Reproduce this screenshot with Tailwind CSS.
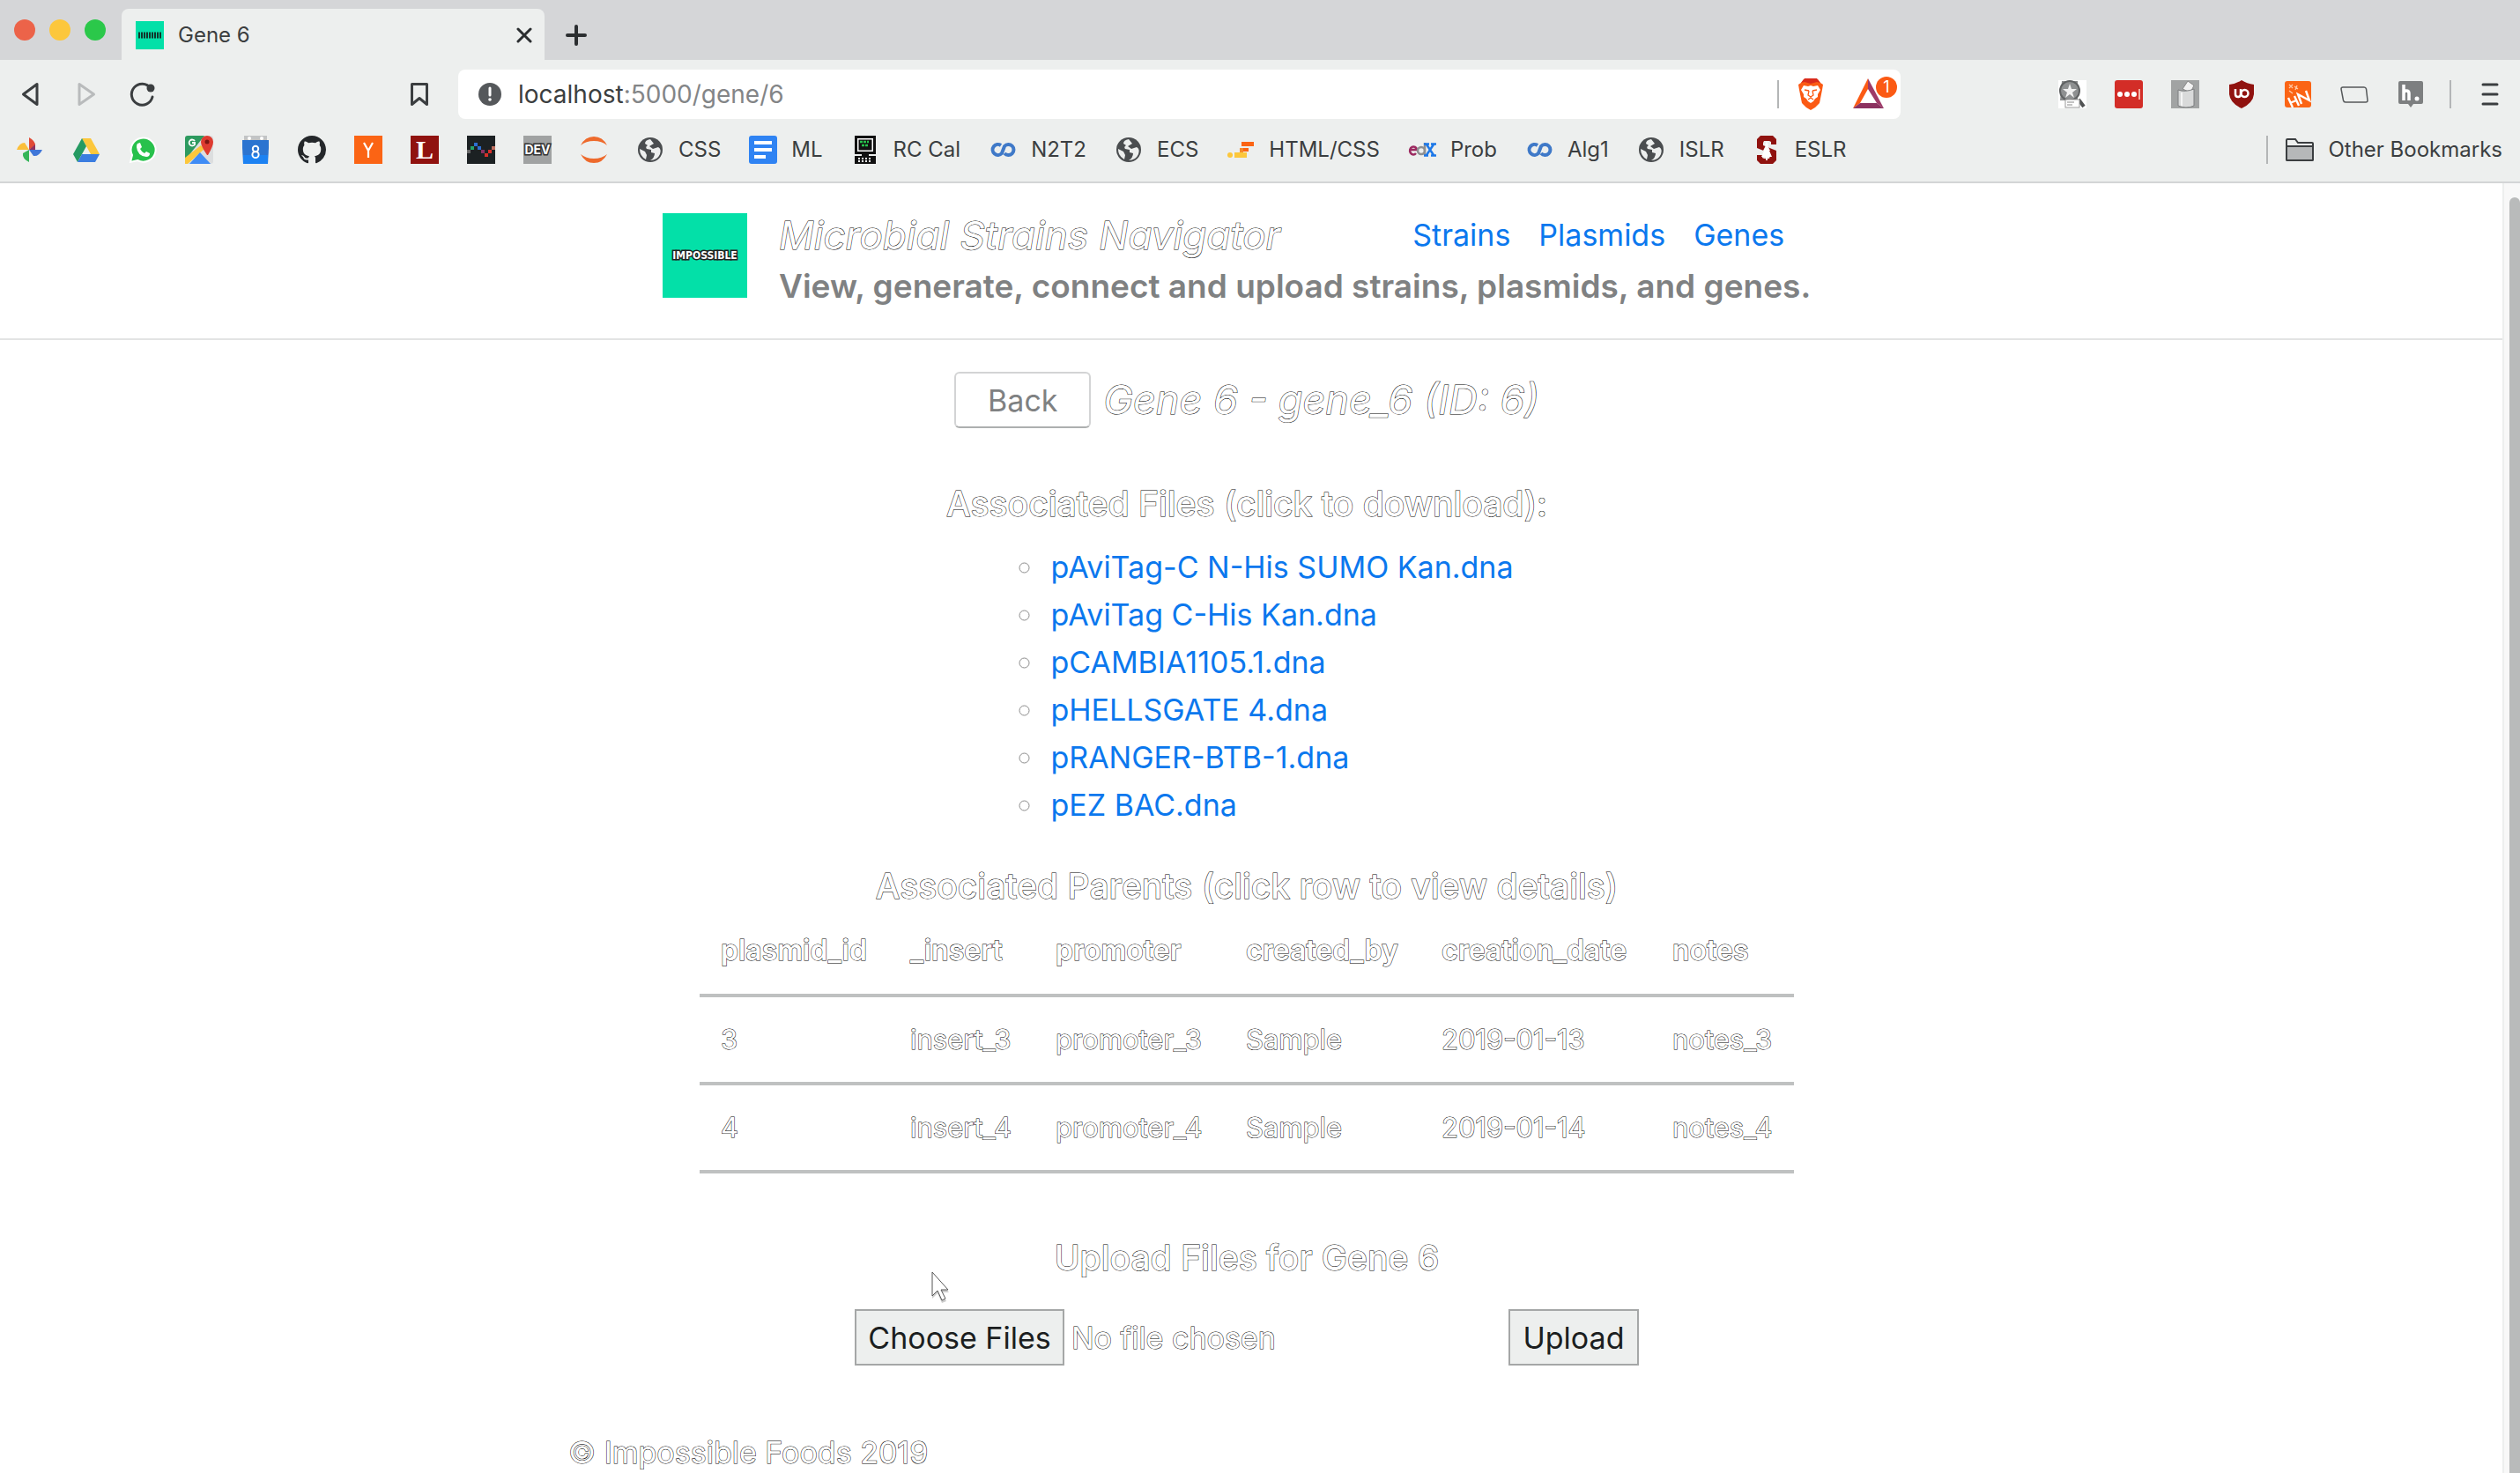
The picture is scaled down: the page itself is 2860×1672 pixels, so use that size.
<!DOCTYPE html>
<html lang="en">
<head>
<meta charset="utf-8">
<title>Gene 6</title>
<script src="https://cdn.jsdelivr.net/npm/@tailwindcss/browser@4"></script>
</head>
<body class="bg-white font-['Inter',sans-serif] text-[#3b3e40]">
<div class="relative flex h-screen flex-col overflow-hidden">

  <!-- tab strip -->
  <div class="flex h-[68px] shrink-0 items-end bg-[#d5d6d8]">
    <div class="flex h-[68px] w-[138px] items-center gap-4 pl-4">
      <span class="size-6 rounded-full bg-[#ec6349]"></span>
      <span class="size-6 rounded-full bg-[#fcc73c]"></span>
      <span class="size-6 rounded-full bg-[#2bc84a]"></span>
    </div>
    <div class="flex h-[58px] w-[480px] items-center rounded-t-[8px] bg-[#edefee] pt-[2px] pr-[14px] pl-4">
      <svg class="mr-4 size-8" viewBox="0 0 32 32"><rect width="32" height="32" fill="#03e0a8"/><path d="M3 16h26" stroke="#12362c" stroke-width="7" stroke-dasharray="2 1"/></svg>
      <span class="grow text-[24px] leading-8">Gene 6</span>
      <button aria-label="Close tab"><svg class="size-[18px]" viewBox="0 0 18 18" stroke="#2b2e30" stroke-width="3" stroke-linecap="round"><path d="M2 2l14 14M16 2L2 16"/></svg></button>
    </div>
    <button aria-label="New tab" class="flex h-[58px] w-[72px] items-center justify-center pt-[2px]"><svg class="size-6" viewBox="0 0 24 24" stroke="#2b2e30" stroke-width="4" stroke-linecap="round"><path d="M12 2v20M2 12h20"/></svg></button>
  </div>

  <!-- toolbar -->
  <div class="flex h-[78px] shrink-0 items-center bg-[#edefee] pl-[18px]">
    <button aria-label="Back" class="mr-8"><svg class="size-8" viewBox="0 0 32 32" fill="none" stroke="#3b3e40" stroke-width="3" stroke-linejoin="round"><path d="M24 4.500v23L8.500 16z"/></svg></button>
    <button aria-label="Forward" class="mr-8"><svg class="size-8" viewBox="0 0 32 32" fill="none" stroke="#b9bbbc" stroke-width="3" stroke-linejoin="round"><path d="M8 4.500v23L24.500 16z"/></svg></button>
    <button aria-label="Reload" class="mr-[282px]"><svg class="size-8" viewBox="0 0 32 32" fill="none" stroke="#3b3e40" stroke-width="3" stroke-linecap="round"><path d="M27 19a12 12 0 1 1-2-10"/><circle cx="25" cy="9" r="4.500" fill="#3b3e40" stroke="none"/></svg></button>
    <button aria-label="Bookmark this page" class="mr-7"><svg class="size-8" viewBox="0 0 32 32" fill="none" stroke="#3b3e40" stroke-width="3" stroke-linejoin="round"><path d="M7.500 4.500h17v23L16 20.500l-8.500 7z"/></svg></button>
    <div class="flex h-14 w-[1637px] items-center rounded-[8px] bg-white pl-[22px]">
      <svg class="mr-[18px] size-7" viewBox="0 0 28 28"><circle cx="14" cy="14" r="13" fill="#55585b"/><path d="M14 7v8" stroke="#fff" stroke-width="3" stroke-linecap="round"/><circle cx="14" cy="20" r="1.800" fill="#fff"/></svg>
      <span class="grow text-[28px] leading-9 text-[#838587]"><span class="text-[#3b3e40]">localhost</span>:5000/gene/6</span>
      <span class="mr-5 h-8 w-[2px] bg-[#b4b6b7]"></span>
      <button aria-label="Brave shields" class="mr-8"><svg class="h-9 w-8" viewBox="0 0 32 36"><path d="M8 1h16l3 4 3 2-1 6-3 15-5 5-5 3-5-3-5-5-3-15-1-6 3-2z" fill="#fb5a14"/><path d="M9 0h14l4 5-4-1-7 2-7-2-4 1z" fill="#d92a1c"/><path d="M8 8l5 1 3-1 3 1 5-1 3 5-3 5 0 3-3 2-2 3-3 2-3-2-2-3-3-2 0-3-3-5z" fill="#fff"/><path d="M9 13l5 1M23 13l-5 1M14 14l-1 5 3 2 3-2-1-5M13 24l3-2 3 2" stroke="#fb5a14" stroke-width="1.300" fill="none"/></svg></button>
      <button aria-label="Brave rewards" class="relative mr-1 h-10 w-[50px]">
        <svg class="h-10 w-9" viewBox="0 0 36 40"><path d="M17 2L0 36l8-6 9-16z" fill="#fb5a14"/><path d="M17 2l18 34-8-6-10-16z" fill="#9e3a68"/><path d="M0 36h35l-8-6H8z" fill="#8c3160"/></svg>
        <span class="absolute top-0 right-0 size-6 rounded-full bg-[#fb5a14] text-center text-[18px] leading-6 text-white">1</span>
      </button>
    </div>
    <div class="ml-auto flex items-center gap-8 pr-[18px]">
      <svg class="size-8" viewBox="0 0 32 32"><rect width="32" height="32" fill="#fff"/><path d="M4 1h18v22H2z" fill="#8b8d8e"/><circle cx="13" cy="12" r="11" fill="#8e9091" stroke="#606263" stroke-width="2"/><path d="M13 4l2 6h6l-5 4 2 6-5-4-5 4 2-6-5-4h6z" fill="#f0f0f0"/><path d="M23 22l6 8" stroke="#505253" stroke-width="4"/><rect x="8" y="22" width="16" height="9" fill="#fff" stroke="#999"/><path d="M10 25h8M10 28h6" stroke="#888"/></svg>
      <svg class="size-8" viewBox="0 0 32 32"><rect width="32" height="32" rx="3" fill="#d32d27"/><circle cx="6" cy="16" r="3" fill="#fff"/><circle cx="14" cy="16" r="3" fill="#fff"/><circle cx="22" cy="16" r="3" fill="#fff"/><path d="M28 10v12" stroke="#f3b0a4" stroke-width="2"/></svg>
      <svg class="size-8" viewBox="0 0 32 32"><rect width="32" height="32" fill="#a1a3a3"/><path d="M13 10l6-9 7 5-4 8z" fill="#f2f2f2" stroke="#888"/><path d="M8 11q8 3 18-1v19q-9 4-18 0z" fill="#d9dada" stroke="#7d7f80"/><path d="M12 14v15" stroke="#f5f5f5" stroke-width="2"/></svg>
      <svg class="size-8" viewBox="0 0 32 32"><path d="M16 0q6 4 14 5v11q-1 10-14 16Q3 26 2 16V5q8-1 14-5z" fill="#90120f"/><path d="M9 10v6q0 3 3 3t3-3v-6" fill="none" stroke="#fff" stroke-width="2.500"/><circle cx="19.500" cy="15" r="4" fill="none" stroke="#fff" stroke-width="2.500"/></svg>
      <svg class="size-8" viewBox="0 0 32 32"><rect x="1" y="1" width="30" height="30" rx="3" fill="#fb6414"/><g fill="none" stroke="#fff" stroke-width="2.400"><path d="M5 20l5 11M12 18l5 11M7 26l7-3M20 27l-4-11 13 7-4-11"/></g><path d="M6 5l4 4M10 5L6 9M12 7l4 3M15 6l-2 5M6 12l4 3" stroke="#ffc9a6" stroke-width="1.300"/></svg>
      <svg class="size-8" viewBox="0 0 32 32"><path d="M3 8h24q2 0 2.500 2l1.500 13q0 2-2 2H6q-2 0-2.500-2L1 10q0-2 2-2z" fill="none" stroke="#55585a" stroke-width="1.500"/></svg>
      <svg class="size-8" viewBox="0 0 32 32"><path d="M4 1h24q2 0 2 2v22q0 2-2 2h-9l-3 4-3-4H4q-2 0-2-2V3q0-2 2-2z" fill="#7d7f80"/><path d="M8 5v18M8 15q0-3 3-3t3 3v8" fill="none" stroke="#fff" stroke-width="3.500"/><circle cx="23" cy="21" r="2.500" fill="#fff"/></svg>
      <span class="ml-[-4px] h-8 w-[2px] bg-[#b4b6b7]"></span>
      <button aria-label="Menu" class="ml-[-4px] flex h-8 w-[32px] items-center justify-center"><svg class="h-7 w-5" viewBox="0 0 20 28" stroke="#3b3e40" stroke-width="3" stroke-linecap="round"><path d="M2 3h16M2 14h16M2 25h16"/></svg></button>
    </div>
  </div>

  <!-- bookmarks bar -->
  <nav class="flex h-[62px] shrink-0 items-center gap-8 border-b-2 border-[#d3d5d6] bg-[#edefee] pr-5 pb-3 pl-[18px] text-[24px] leading-8 whitespace-nowrap">
    <a href="#" aria-label="Photos"><svg class="size-8" viewBox="0 0 32 32"><path d="M15 2q7 4 7 9l-7 5z" fill="#e04a36"/><path d="M1 16q3-8 9-8l5 8z" fill="#fbbf3a"/><path d="M30 16q-4 8-10 7l-5-7z" fill="#3f76d8"/><path d="M22 10v6h-7z" fill="#8c3160"/><path d="M15 30q-8-4-7-10l7-4z" fill="#34b558"/></svg></a>
    <a href="#" aria-label="Drive"><svg class="size-8" viewBox="0 0 32 32"><path d="M11 3h10l10 18H21z" fill="#fcc73c"/><path d="M11 3l5 9L6 30 1 21z" fill="#259a62"/><path d="M11 21h20l-5 9H6z" fill="#3b7de0"/></svg></a>
    <a href="#" aria-label="WhatsApp"><svg class="size-8" viewBox="0 0 32 32"><path d="M2 30l2-8a14 13.500 0 1 1 6 6z" fill="#28c14c" stroke="#fff" stroke-width="2"/><path d="M10 9l3-1 2 5-2 2q2 4 5 5l2-2 4 2q0 4-4 4Q10 23 9 13q0-3 1-4z" fill="#fff"/></svg></a>
    <a href="#" aria-label="Maps"><svg class="size-8" viewBox="0 0 32 32"><rect width="32" height="32" rx="3" fill="#dcdedf"/><path d="M3 0h19L0 28V3q0-3 3-3z" fill="#2d9a5f"/><path d="M0 25L18 11l4 4L3 32H0z" fill="#fcc73c"/><path d="M5 32l12-13 12 13z" fill="#3f8cf5"/><path d="M25 0a7 7 0 0 1 7 7q0 5-6 15h-1Q18 12 18 7a7 7 0 0 1 7-7z" fill="#de3b30"/><circle cx="25" cy="7" r="2.500" fill="#7d1612"/><path d="M11 6a3.500 3.500 0 1 0 0 4V8H8" stroke="#fff" stroke-width="1.800" fill="none"/></svg></a>
    <a href="#" aria-label="Calendar"><svg class="size-8" viewBox="0 0 32 32"><path d="M3 0h26v6H3z" fill="#c2c4c5"/><circle cx="9" cy="3" r="2" fill="#fff"/><circle cx="23" cy="3" r="2" fill="#fff"/><path d="M1 5h30v9l-1 18H2L1 14z" fill="#2c74d0"/><path d="M2 22h28v10H2z" fill="#1d82f2"/><g fill="none" stroke="#fff" stroke-width="2"><circle cx="16" cy="15" r="3.200"/><circle cx="16" cy="21.500" r="3.600"/></g></svg></a>
    <a href="#" aria-label="GitHub"><svg class="size-8" viewBox="0 0 16 16"><path fill="#24272a" d="M8 0C3.580 0 0 3.580 0 8c0 3.540 2.290 6.530 5.470 7.590.4.070.55-.17.55-.38 0-.19-.01-.82-.01-1.490-2.010.37-2.530-.49-2.690-.94-.09-.23-.48-.94-.82-1.130-.28-.15-.68-.52-.01-.53.63-.01 1.080.58 1.230.82.720 1.210 1.870.87 2.330.66.070-.52.280-.87.510-1.070-1.780-.2-3.640-.89-3.640-3.950 0-.87.310-1.590.82-2.150-.08-.2-.36-1.020.08-2.120 0 0 .67-.21 2.200.82a7.600 7.600 0 0 1 4 0c1.530-1.040 2.200-.82 2.200-.82.440 1.100.160 1.920.080 2.120.510.560.820 1.270.820 2.150 0 3.070-1.870 3.750-3.650 3.950.290.250.540.730.540 1.480 0 1.070-.01 1.930-.01 2.200 0 .210.150.460.550.380A8 8 0 0 0 16 8c0-4.420-3.580-8-8-8z"/></svg></a>
    <a href="#" aria-label="Hacker News"><svg class="size-8" viewBox="0 0 32 32"><rect width="32" height="32" fill="#fb6414"/><path d="M11 8l5 9 5-9M16 17v8" stroke="#fff" stroke-width="2.200" fill="none"/></svg></a>
    <a href="#" aria-label="L" class="flex size-8 items-center justify-center bg-[#90120f] font-['Liberation_Serif',serif] text-[30px] font-bold text-white">L</a>
    <a href="#" aria-label="Charts"><svg class="size-8" viewBox="0 0 32 32"><rect width="32" height="32" fill="#1c2123"/><path d="M0 16h4v4H0z" fill="#666"/><path d="M4 12h4v4H4z" fill="#26a269"/><path d="M8 8h4v4H8zM12 12h4v4h-4z" fill="#2d6fd2"/><path d="M16 16h4v4h-4z" fill="#8c3160"/><path d="M20 20h4v4h-4zM24 16h4v4h-4z" fill="#d8302a"/><path d="M28 12h4v4h-4z" fill="#c07060"/></svg></a>
    <a href="#" aria-label="DEV" class="flex size-8 items-center justify-center bg-[#a0a2a2] text-[14px] font-bold text-white [-webkit-text-stroke:3px_#333] [paint-order:stroke_fill]">DEV</a>
    <a href="#" aria-label="Jupyter"><svg class="size-8" viewBox="0 0 32 32" fill="#ee6a2c"><path d="M1 11Q6 1 16 1t15 10Q25 6 16 6T1 11zM1 21q5 10 15 10t15-10q-6 5-15 5T1 21z"/></svg></a>
    <a href="#" class="flex items-center gap-4"><svg class="size-8" viewBox="0 0 32 32"><circle cx="16" cy="16" r="14" fill="#4a4d4f"/><path d="M16 4q-6 1-6 5l3 2q-3 2-1 4l5 1v3l4 1q0 5-5 8 8 0 11-7 2-6-2-8l-6 2-4-3 5-3z" fill="#edefee"/><path d="M4 15l6 3 2 4-1 5q-7-4-7-12z" fill="#edefee"/></svg>CSS</a>
    <a href="#" class="flex items-center gap-4"><svg class="size-8" viewBox="0 0 32 32"><rect width="32" height="32" rx="3" fill="#2f83f3"/><path d="M6 8h20M6 16h20M6 24h13" stroke="#fff" stroke-width="4"/></svg>ML</a>
    <a href="#" class="flex items-center gap-4"><svg class="size-8" viewBox="0 0 32 32"><path d="M4 0h24v21H4z" fill="#111"/><path d="M7 3h18v15H7z" fill="#fff"/><path d="M8.500 4.500h15v12h-15z" fill="#111"/><path d="M10 7h10M12 11h8" stroke="#27c24c" stroke-width="2.500" stroke-dasharray="3 1"/><path d="M12 21h8v2h8v9H4v-9h8z" fill="#111"/><path d="M8 26h16M8 29h16" stroke="#fff" stroke-width="2" stroke-dasharray="2 2"/></svg>RC Cal</a>
    <a href="#" class="flex items-center gap-4"><svg class="size-8" viewBox="0 0 32 32" fill="none" stroke="#3f79c8" stroke-width="4"><path d="M14 11a6 6 0 1 0 1 9l3-8a6 6 0 1 1 0 8"/></svg>N2T2</a>
    <a href="#" class="flex items-center gap-4"><svg class="size-8" viewBox="0 0 32 32"><circle cx="16" cy="16" r="14" fill="#4a4d4f"/><path d="M16 4q-6 1-6 5l3 2q-3 2-1 4l5 1v3l4 1q0 5-5 8 8 0 11-7 2-6-2-8l-6 2-4-3 5-3z" fill="#edefee"/><path d="M4 15l6 3 2 4-1 5q-7-4-7-12z" fill="#edefee"/></svg>ECS</a>
    <a href="#" class="flex items-center gap-4"><svg class="size-8" viewBox="0 0 32 32"><path d="M17 7h14v5H17zM18 14h7v4h-7z" fill="#fb6414"/><path d="M15 14h4v8h-4z" fill="#f58a2c"/><path d="M9 19h14v6H9z" fill="#fcc73c"/><circle cx="4" cy="22" r="3" fill="#fcc73c"/></svg>HTML/CSS</a>
    <a href="#" class="flex items-center gap-4"><svg class="size-8" viewBox="0 0 32 32" fill="none" stroke-width="2.500"><path d="M2 16h8a4 4.500 0 1 0-1 4" stroke="#9c2a60"/><circle cx="15" cy="17" r="4" stroke="#8d8f91"/><path d="M19 8v14" stroke="#8d8f91"/><path d="M21 10l8 12M29 10l-8 12M18 9.500h6M26 9.500h6M18 22.500h5M26 22.500h6" stroke="#1d78e8"/></svg>Prob</a>
    <a href="#" class="flex items-center gap-4"><svg class="size-8" viewBox="0 0 32 32" fill="none" stroke="#3f79c8" stroke-width="4"><path d="M14 11a6 6 0 1 0 1 9l3-8a6 6 0 1 1 0 8"/></svg>Alg1</a>
    <a href="#" class="flex items-center gap-4"><svg class="size-8" viewBox="0 0 32 32"><circle cx="16" cy="16" r="14" fill="#4a4d4f"/><path d="M16 4q-6 1-6 5l3 2q-3 2-1 4l5 1v3l4 1q0 5-5 8 8 0 11-7 2-6-2-8l-6 2-4-3 5-3z" fill="#edefee"/><path d="M4 15l6 3 2 4-1 5q-7-4-7-12z" fill="#edefee"/></svg>ISLR</a>
    <a href="#" class="flex items-center gap-4"><svg class="size-8" viewBox="0 0 32 32"><path d="M9 0h14l4 4v6h-6V7l-2-1h-6l-1 2v3l15 6v11l-4 4H9l-4-4v-6h6v3l2 1h6l1-3v-3L5 14V4z" fill="#90120f"/><path d="M16 6l2 5h-1l3 6h-1l3 7h-5v4h-2v-4h-5l3-7h-1l3-6h-1z" fill="#fff"/></svg>ESLR</a>
    <div class="ml-auto flex items-center">
      <span class="mr-5 h-8 w-[2px] bg-[#b4b6b7]"></span>
      <a href="#" class="flex items-center gap-4"><svg class="size-8" viewBox="0 0 32 32" stroke="#3b3e40" stroke-width="2"><path d="M1 27V5q0-1 1-1h9l3 4h16q1 0 1 1v18q0 1-1 1H2q-1 0-1-1z" fill="#edefee"/><path d="M1 12h30v15q0 1-1 1H2q-1 0-1-1z" fill="#b6b8b9"/></svg>Other Bookmarks</a>
    </div>
  </nav>

  <!-- page viewport -->
  <div class="flex min-h-0 grow">
    <div class="min-w-0 grow overflow-hidden">
      <header class="border-b-2 border-[#e3e4e4] pt-[31px] pr-[10px] pb-[35px]">
        <div class="mx-auto flex w-full max-w-[1326px] items-start">
          <div class="mt-[3px] mr-9 flex size-24 shrink-0 items-center justify-center bg-[#03e0a8] font-['DejaVu_Sans_Condensed','DejaVu_Sans',sans-serif] text-[12px] font-bold text-white [-webkit-text-stroke:3px_#222] [paint-order:stroke_fill]">IMPOSSIBLE</div>
          <div>
            <div class="flex items-center justify-between pr-[30px]">
              <div class="text-[44px] leading-[56px] text-white italic [-webkit-text-stroke:1px_#000] [paint-order:stroke_fill]">Microbial Strains Navigator</div>
              <nav class="flex gap-8 text-[34px] leading-[56px] text-[#0b78ee]"><a href="#">Strains</a><a href="#">Plasmids</a><a href="#">Genes</a></nav>
            </div>
            <p class="mt-[6px] text-[37px] leading-[48px] font-semibold whitespace-nowrap text-[#7f8182]">View, generate, connect and upload strains, plasmids, and genes.</p>
          </div>
        </div>
      </header>

      <div class="pr-[10px]">
      <main class="mx-auto flex w-full max-w-[1540px] flex-col items-center pt-9">
        <div class="flex items-center gap-[14px]">
          <button class="h-16 w-[155px] rounded-[6px] border-2 border-[#d3d4d5] border-b-[#adafaf] text-[34px] text-[#7f8182]">Back</button>
          <h1 class="text-[45px] leading-[64px] text-white italic [-webkit-text-stroke:1px_#000] [paint-order:stroke_fill]">Gene 6 - gene_6 (ID: 6)</h1>
        </div>

        <h2 class="mt-[62px] text-[39px] leading-[48px] font-medium text-white [-webkit-text-stroke:1px_#000] [paint-order:stroke_fill]">Associated Files (click to download):</h2>
        <ul class="mt-[21px] list-[circle] pl-[74px] text-[34px] leading-[54px] marker:text-[#8a8a8a]">
          <li class="pl-[6px]"><a href="#" class="text-[#0b78ee]">pAviTag-C N-His SUMO Kan.dna</a></li>
          <li class="pl-[6px]"><a href="#" class="text-[#0b78ee]">pAviTag C-His Kan.dna</a></li>
          <li class="pl-[6px]"><a href="#" class="text-[#0b78ee]">pCAMBIA1105.1.dna</a></li>
          <li class="pl-[6px]"><a href="#" class="text-[#0b78ee]">pHELLSGATE 4.dna</a></li>
          <li class="pl-[6px]"><a href="#" class="text-[#0b78ee]">pRANGER-BTB-1.dna</a></li>
          <li class="pl-[6px]"><a href="#" class="text-[#0b78ee]">pEZ BAC.dna</a></li>
        </ul>

        <h2 class="mt-[41px] text-[39px] leading-[48px] font-medium text-white [-webkit-text-stroke:1px_#000] [paint-order:stroke_fill]">Associated Parents (click row to view details)</h2>
        <table class="w-[1242px] table-fixed border-collapse text-left text-[31px] leading-10 text-white [-webkit-text-stroke:1px_#000] [paint-order:stroke_fill]">
          <colgroup><col class="w-[215px]"><col class="w-[165px]"><col class="w-[216px]"><col class="w-[222px]"><col class="w-[262px]"><col></colgroup>
          <thead>
            <tr class="h-[100px] border-b-4 border-[#bfc1c1] text-[32px]"><th class="pl-6 font-semibold">plasmid_id</th><th class="pl-6 font-semibold">_insert</th><th class="pl-6 font-semibold">promoter</th><th class="pl-6 font-semibold">created_by</th><th class="pl-6 font-semibold">creation_date</th><th class="pl-6 font-semibold">notes</th></tr>
          </thead>
          <tbody>
            <tr class="h-[100px] border-b-4 border-[#bfc1c1]"><td class="pl-6">3</td><td class="pl-6">insert_3</td><td class="pl-6">promoter_3</td><td class="pl-6">Sample</td><td class="pl-6">2019-01-13</td><td class="pl-6">notes_3</td></tr>
            <tr class="h-[100px] border-b-4 border-[#bfc1c1]"><td class="pl-6">4</td><td class="pl-6">insert_4</td><td class="pl-6">promoter_4</td><td class="pl-6">Sample</td><td class="pl-6">2019-01-14</td><td class="pl-6">notes_4</td></tr>
          </tbody>
        </table>

        <h2 class="mt-[72px] text-[39px] leading-[48px] font-medium text-white [-webkit-text-stroke:1px_#000] [paint-order:stroke_fill]">Upload Files for Gene 6</h2>
        <form class="mt-[34px] flex w-[890px] items-center justify-between text-[34px]">
          <input type="file" multiple aria-label="Files to upload" class="h-16 w-[640px] text-white [-webkit-text-stroke:1px_#000] [paint-order:stroke_fill] file:mr-2 file:h-16 file:w-[238px] file:border-2 file:border-[#a5a7a7] file:bg-[#edefee] file:text-[#1b1e20] file:[-webkit-text-stroke:0px]">
          <button type="button" class="h-16 w-[148px] border-2 border-[#a5a7a7] bg-[#edefee] text-[#1b1e20]">Upload</button>
        </form>
        <footer class="mt-[74px] self-start text-[34px] leading-[50px] text-white [-webkit-text-stroke:1px_#000] [paint-order:stroke_fill]">© Impossible Foods 2019</footer>
      </main>
      </div>
    </div>
    <!-- scrollbar -->
    <div class="w-5 shrink-0 border-l-2 border-[#edefee] bg-[#f8f8f8] pt-4 pl-[6px]"><div class="h-full w-3 rounded-t-full bg-[#b9bbbb]"></div></div>
  </div>

  <!-- pointer -->
  <svg class="absolute top-[1442px] left-[1056px] h-10 w-6" viewBox="0 0 24 40"><path d="M2 3v29l6-6 5 11 5-2-5-10h8z" fill="#ccc"/><path d="M2 2v27l6-6 5 11 4-2-5-10h8z" fill="#fff" stroke="#555" stroke-width="1"/></svg>
</div>
</body>
</html>
